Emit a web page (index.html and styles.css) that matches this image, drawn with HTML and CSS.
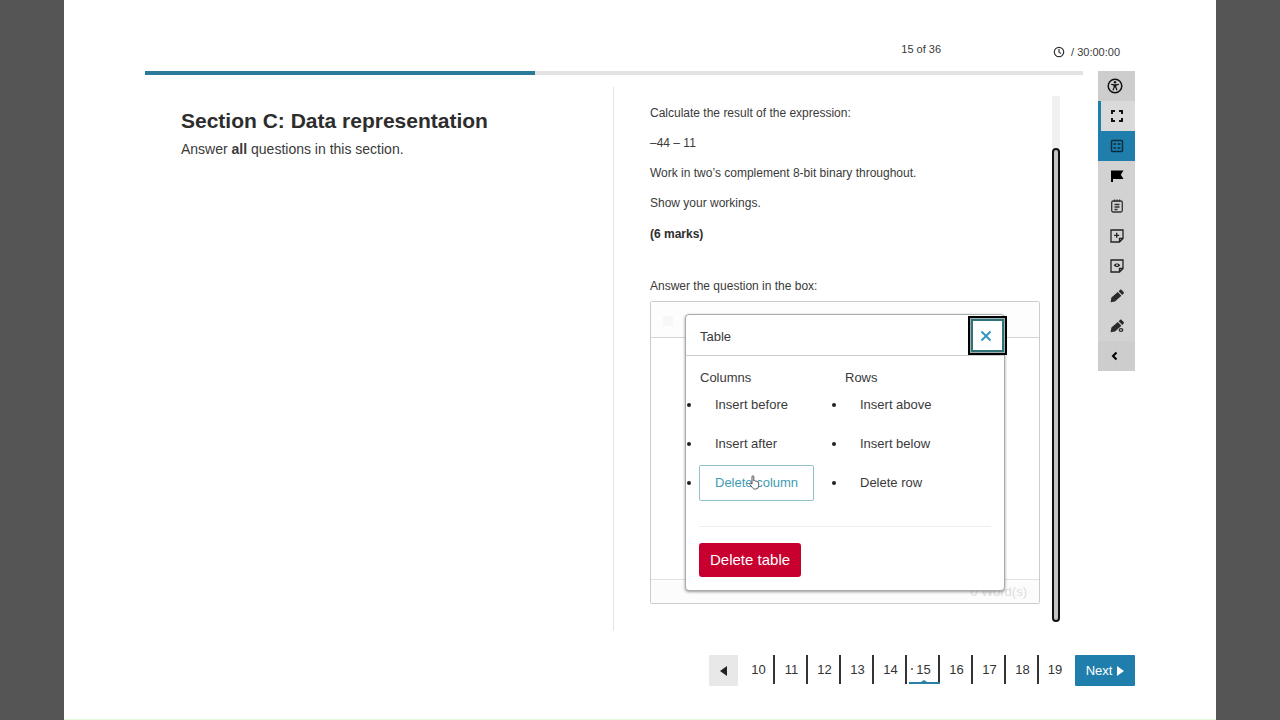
FILE: index.html
```html
<!DOCTYPE html>
<html lang="en">
<head>
    <meta charset="UTF-8">
    <meta name="viewport" content="width=device-width, initial-scale=1.0">
    <title>Section C: Data representation</title>
    <link rel="stylesheet" href="styles.css">
</head>
<body>
    <div class="page">
        <header class="top-bar">
            <span class="count">15 of 36</span>
            <span class="timer">
                <svg width="12" height="12" viewBox="0 0 12 12" fill="none" stroke="#333" stroke-width="1.2"><circle cx="6" cy="6" r="4.7"/><path d="M6 3v3l2 1.6"/></svg>
                / 30:00:00
            </span>
        </header>

        <div class="content">
            <main class="main">
                <div class="progress"><div class="progress-fill" style="width: 41.6%"></div></div>
                <div class="columns">
                    <section class="intro">
                        <h1>Section C: Data representation</h1>
                        <p>Answer <strong>all</strong> questions in this section.</p>
                    </section>
                    <section class="question">
                        <div class="question-body">
                            <p>Calculate the result of the expression:</p>
                            <p>–44 – 11</p>
                            <p>Work in two’s complement 8-bit binary throughout.</p>
                            <p>Show your workings.</p>
                            <p class="marks">(6 marks)</p>
                            <p class="answer-label">Answer the question in the box:</p>
                            <div class="editor">
                                <div class="editor-tools"><span class="tool-ghost"></span></div>
                                <div class="editor-area"></div>
                                <div class="editor-status">0 Word(s)</div>

                                <div class="modal" role="dialog" aria-labelledby="modal-title">
                                    <div class="modal-header">
                                        <h2 id="modal-title">Table</h2>
                                        <button class="close" aria-label="Close">
                                            <svg width="12" height="12" viewBox="0 0 12 12" fill="none" stroke="#3595bd" stroke-width="2"><path d="M1.500 1.500l9 9M10.500 1.500l-9 9"/></svg>
                                        </button>
                                    </div>
                                    <div class="modal-body">
                                        <div class="options">
                                            <div class="option-group">
                                                <h3>Columns</h3>
                                                <ul>
                                                    <li><button>Insert before</button></li>
                                                    <li><button>Insert after</button></li>
                                                    <li><button class="hovered">Delete column</button>
                                                        <svg class="pointer" width="11" height="15" viewBox="0 0 11 15" fill="#fff" stroke="#555" stroke-width="1" stroke-linejoin="round"><path d="M3 9V1.800c0-1.500 1.800-1.500 1.800 0V6c.5-.7 1.600-.5 1.700.3.600-.5 1.500-.2 1.600.6.700-.3 1.600 0 1.600 1v2.600c0 2-1 3.500-3 3.500H5.500c-1 0-1.700-.6-2.200-1.500L.8 9.400c-.6-1 .6-1.700 1.300-1z"/></svg>
                                                    </li>
                                                </ul>
                                            </div>
                                            <div class="option-group">
                                                <h3>Rows</h3>
                                                <ul>
                                                    <li><button>Insert above</button></li>
                                                    <li><button>Insert below</button></li>
                                                    <li><button>Delete row</button></li>
                                                </ul>
                                            </div>
                                        </div>
                                        <hr>
                                        <button class="delete-table">Delete table</button>
                                    </div>
                                </div>
                            </div>
                        </div>
                        <div class="scroll-track"><div class="scroll-thumb"></div></div>
                    </section>
                </div>
            </main>

            <aside class="toolbar">
                <button class="tool raised" aria-label="Accessibility">
                    <svg width="16" height="16" viewBox="0 0 16 16" fill="none" stroke="#111"><circle cx="8" cy="8" r="6.800" stroke-width="1.500"/><circle cx="8" cy="4.300" r="1.200" fill="#111" stroke="none"/><path d="M4.200 6.400l2.800.5h2l2.800-.5" stroke-width="1.200"/><path d="M7.200 6.800v2.400L6 12.300M8.800 6.800v2.400l1.200 3.100M8 6.800v2.800" stroke-width="1.200"/></svg>
                </button>
                <button class="tool current" aria-label="Full screen">
                    <svg width="14" height="14" viewBox="0 0 14 14" fill="none" stroke="#111" stroke-width="2"><path d="M2 5V2h3M9 2h3v3M12 9v3H9M5 12H2V9"/></svg>
                </button>
                <button class="tool active" aria-label="Contents">
                    <svg width="14" height="14" viewBox="0 0 14 14" fill="none" stroke="#0b2a3c" stroke-width="1.400"><rect x="1.500" y="1.500" width="11" height="11" rx="1"/><path d="M3.500 5H6M7.500 5h3M3.500 9H6M7.500 9h3" stroke-width="1.600"/></svg>
                </button>
                <button class="tool" aria-label="Flag">
                    <svg width="14" height="14" viewBox="0 0 14 14" fill="#000"><path d="M1 1.500h12.500L10.800 5.800l2.700 4.200H3v3H1z"/></svg>
                </button>
                <button class="tool" aria-label="Notepad">
                    <svg width="14" height="14" viewBox="0 0 14 14" fill="none" stroke="#333" stroke-width="1.300"><rect x="1.700" y="2" width="10.600" height="11" rx="1.500"/><path d="M4.500.5v2.500M7 .5v2.500M9.500.5v2.500M4.500 5.500h5M4.500 8h5M4.500 10.500h3"/></svg>
                </button>
                <button class="tool" aria-label="Add note">
                    <svg width="14" height="14" viewBox="0 0 14 14" fill="none" stroke="#222" stroke-width="1.300"><path d="M1 1h12v8.500L9.500 13H1zM9.500 13V9.500H13M6.700 3.800v5M4.200 6.300h5"/></svg>
                </button>
                <button class="tool" aria-label="View notes">
                    <svg width="14" height="14" viewBox="0 0 14 14" fill="none" stroke="#222" stroke-width="1.300"><path d="M1 1h12v8.500L9.500 13H1zM9.500 13V9.500H13"/><path d="M3.800 6.200c1.500-2.400 4.900-2.400 6.400 0-1.500 2.400-4.900 2.400-6.400 0z" fill="#222" stroke="none"/><circle cx="7" cy="6.200" r=".9" fill="#d2d2d2" stroke="none"/></svg>
                </button>
                <button class="tool" aria-label="Highlight">
                    <svg width="14" height="14" viewBox="0 0 14 14" fill="#2b2b2b"><path d="M.6 13.200l.8-4.600L7.800 2.900l3.600 3.800L5 12.400zM8.600 2.200L10 .9c.5-.5 1.100-.5 1.600 0l2 2.200c.5.5.4 1.100 0 1.500L12.200 6z"/></svg>
                </button>
                <button class="tool" aria-label="Highlight options">
                    <svg width="14" height="14" viewBox="0 0 14 14" fill="#2b2b2b"><path d="M.6 13.200l.8-4.600L7.800 2.900l3.600 3.800L5 12.400zM8.600 2.200L10 .9c.5-.5 1.100-.5 1.600 0l2 2.200c.5.5.4 1.100 0 1.500L12.200 6z"/><ellipse cx="11" cy="11" rx="2.800" ry="2.200" fill="#d2d2d2"/><ellipse cx="11" cy="11" rx="1.800" ry="1.300" fill="none" stroke="#2b2b2b" stroke-width="1.200"/></svg>
                </button>
                <button class="tool raised" aria-label="Collapse">
                    <svg width="14" height="14" viewBox="0 0 14 14" fill="none" stroke="#000" stroke-width="2"><path d="M8.500 3.500L5 7l3.500 3.500"/></svg>
                </button>
            </aside>
        </div>

        <nav class="pager">
            <button class="prev" aria-label="Previous"><svg width="7" height="10" viewBox="0 0 7 10"><path d="M7 0v10L0 5z" fill="#222"/></svg></button>
            <div class="page-links">
                <a href="#">10</a>
                <a href="#">11</a>
                <a href="#">12</a>
                <a href="#">13</a>
                <a href="#">14</a>
                <a href="#" class="selected">15</a>
                <a href="#">16</a>
                <a href="#">17</a>
                <a href="#">18</a>
                <a href="#">19</a>
            </div>
            <button class="next">Next <svg width="7" height="10" viewBox="0 0 7 10"><path d="M0 0v10l7-5z" fill="#fff"/></svg></button>
        </nav>
    </div>
</body>
</html>
```
FILE: styles.css
```css
* {
    box-sizing: border-box;
}
body {
    margin: 0;
    background-color: #555;
    color: #3a3a3a;
    font-family: "Liberation Sans", Arial, sans-serif;
    font-size: 12px;
    line-height: 16px;
}
button {
    font: inherit;
    color: inherit;
    border: none;
    padding: 0;
    cursor: pointer;
}
svg {
    display: block;
}
h1, h2, h3, p, ul {
    margin: 0;
}
.page {
    margin: 0 5%;
    padding: 0 81px;
    min-height: 100vh;
    background-color: #fff;
    border-bottom: 1px solid #e2fbdc;
}

/* header */
.top-bar {
    display: flex;
    justify-content: flex-end;
    align-items: flex-end;
    gap: 112px;
    height: 71px;
    padding: 0 15px 11px 0;
    font-size: 11px;
}
.count {
    padding-bottom: 3px;
}
.timer {
    display: flex;
    align-items: center;
    gap: 6px;
}
.content {
    display: flex;
    align-items: flex-start;
    gap: 15px;
}
.main {
    flex: 1;
}
.progress {
    height: 4px;
    background-color: #e3e3e3;
}
.progress-fill {
    height: 4px;
    background-color: #2b7a9b;
}
.columns {
    display: flex;
    margin-top: 12px;
}
.intro {
    width: 50%;
    padding: 22px 36px;
    border-right: 1px solid #e4e4e4;
    font-size: 14px;
}
.intro h1 {
    margin-bottom: 8px;
    font-size: 21px;
    line-height: 24px;
    color: #2d2d2d;
}

/* question */
.question {
    width: 50%;
    display: flex;
    gap: 12px;
    padding: 9px 23px 9px 36px;
}
.question-body {
    flex: 1;
    padding: 9px 0 18px;
}
.question-body p {
    margin-bottom: 14px;
}
.question-body .marks {
    margin-bottom: 36px;
    padding-top: 1px;
    font-weight: bold;
    color: #2d2d2d;
}
.question-body .answer-label {
    margin-bottom: 7px;
}
.scroll-track {
    width: 8px;
    padding-top: 52px;
    display: flex;
    background-color: #f0f0f0;
}
.scroll-thumb {
    flex: 1;
    background-color: #c4c4c4;
    border: 2px solid #111;
    border-radius: 4px;
}
.editor {
    position: relative;
    border: 1px solid #ccc;
    border-radius: 2px;
}
.editor-tools {
    height: 36px;
    padding: 14px 12px;
    background-color: #fdfdfd;
    border-bottom: 1px solid #d5d5d5;
}
.tool-ghost {
    display: block;
    width: 10px;
    height: 10px;
    background-color: #f7f7f7;
}
.editor-area {
    height: 241px;
}
.editor-status {
    height: 24px;
    padding: 4px 12px;
    border-top: 1px solid #e2e2e2;
    background-color: #fcfcfc;
    color: #ddd;
    font-size: 13px;
    text-align: right;
}

/* table dialog */
.modal {
    position: absolute;
    top: 12px;
    left: 34px;
    right: 34px;
    bottom: 12px;
    background-color: #fff;
    border: 1px solid #aaa;
    border-radius: 4px;
    box-shadow: 0 1px 3px rgba(0, 0, 0, 0.4);
    font-size: 13px;
}
.modal-header {
    display: flex;
    justify-content: space-between;
    align-items: center;
    height: 41px;
    padding-left: 14px;
    border-bottom: 1px solid #ccc;
}
.modal h2, .modal h3 {
    font-size: 13px;
    font-weight: normal;
}
.modal h2 {
    padding-top: 3px;
}
.close {
    display: flex;
    align-items: center;
    justify-content: center;
    width: 33px;
    height: 33px;
    padding: 2px 3px 0 0;
    background-color: #fff;
    border: 2px solid #2f7378;
    box-shadow: 0 0 0 1px #9fb0b2;
    outline: 2px solid #000;
    outline-offset: 1px;
}
.modal-body {
    padding: 14px 13px;
}
.options {
    display: flex;
}
.option-group {
    flex: 0 0 145px;
}
.option-group h3 {
    padding: 0 0 1px 1px;
}
.option-group ul {
    padding: 0;
    list-style: none;
}
.option-group li {
    position: relative;
    margin-bottom: 3px;
}
.option-group li::before {
    content: "";
    position: absolute;
    left: -12px;
    top: 16px;
    width: 4px;
    height: 4px;
    border-radius: 50%;
    background-color: #222;
}
.option-group button {
    height: 36px;
    padding: 0 15px;
    background-color: #fff;
    border: 1px solid transparent;
    border-radius: 2px;
}
.option-group .hovered {
    color: #3f9cb3;
    border-color: #8fc0cc;
}
.pointer {
    position: absolute;
    left: 50px;
    top: 10px;
}
.modal hr {
    margin: 22px 0 16px;
    border: none;
    border-top: 1px solid #eee;
}
.delete-table {
    height: 34px;
    padding: 0 11px;
    background-color: #c8002f;
    border-radius: 3px;
    color: #fff;
    font-size: 15px;
}

/* side tools */
.toolbar {
    display: flex;
    flex-direction: column;
    width: 37px;
    background-color: #d2d2d2;
}
.tool {
    display: flex;
    align-items: center;
    justify-content: center;
    height: 30px;
    background-color: transparent;
}
.raised {
    padding-right: 3px;
    background-color: #cdcdcd;
}
.current {
    background-color: #dadada;
    box-shadow: inset 3px 0 #1f7eac;
}
.active {
    background-color: #1f7eac;
}

/* pager */
.pager {
    display: flex;
    justify-content: flex-end;
    gap: 4px;
    margin-top: 24px;
    font-size: 13px;
}
.prev {
    display: flex;
    align-items: center;
    justify-content: center;
    width: 29px;
    height: 31px;
    background-color: #e8e8e8;
    border-radius: 1px;
}
.page-links {
    display: flex;
}
.page-links a {
    width: 33px;
    height: 29px;
    padding-left: 2px;
    border-right: 2px solid #333;
    color: #333;
    line-height: 29px;
    text-align: center;
    text-decoration: none;
}
.page-links a:last-child {
    width: 32px;
    border-right: none;
    padding-left: 0;
}
.page-links .selected {
    position: relative;
    background: radial-gradient(circle at 5px 14px, #777 1px, transparent 1px);
}
.selected::before {
    content: "";
    position: absolute;
    left: 2px;
    right: -2px;
    bottom: 0;
    height: 2px;
    background-color: #2980a5;
}
.selected::after {
    content: "";
    position: absolute;
    left: 14px;
    bottom: 2px;
    border: 3px solid transparent;
    border-top: none;
    border-bottom: 2px solid #2980a5;
}
.next {
    display: flex;
    align-items: center;
    justify-content: center;
    gap: 5px;
    width: 60px;
    height: 31px;
    background-color: #1f7eac;
    border-radius: 1px;
    color: #fff;
}
```
